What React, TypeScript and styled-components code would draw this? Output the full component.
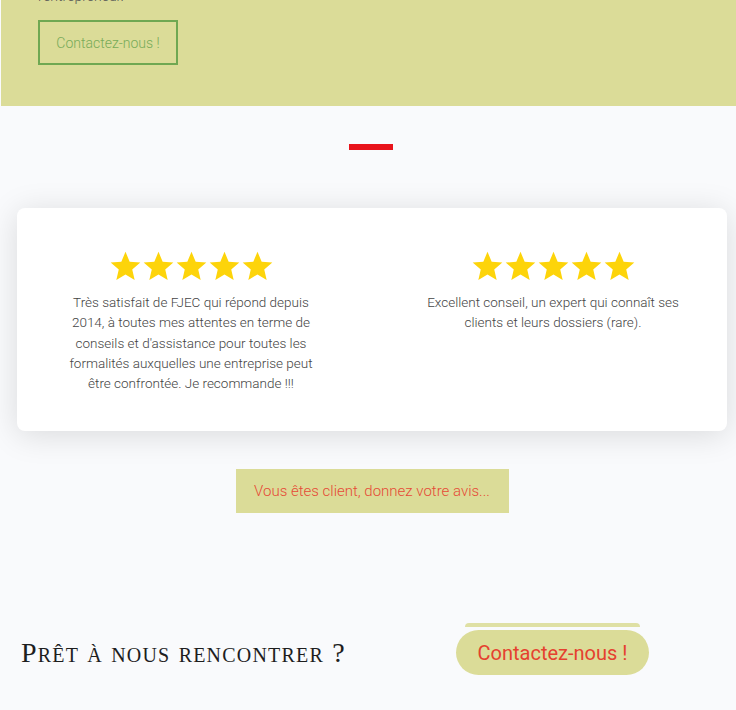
import React from 'react'
import styled, { createGlobalStyle } from 'styled-components'

const GlobalStyle = createGlobalStyle`
    html, body {
        margin: 0;
        padding: 0;
        background: #f9fafc;
        font-family: Roboto, "Liberation Sans", sans-serif;
    }
`

const Page = styled.div`
    width: 736px;
    min-height: 710px;
    overflow: hidden;
`

const Hero = styled.section`
    display: flow-root;
    height: 106px;
    margin-left: 1px;
    padding: 0 37px;
    background: #dbdc98;
    box-sizing: border-box;
`

const HeroText = styled.p`
    margin: -14px 0 0;
    font-size: 14px;
    line-height: 20px;
    font-weight: 300;
    color: #555;
`

const OutlineButton = styled.a`
    display: inline-flex;
    align-items: center;
    justify-content: center;
    margin-top: 14px;
    width: 140px;
    height: 45px;
    box-sizing: border-box;
    border: 2px solid #6fa852;
    color: #78ab59;
    font-size: 14px;
    font-weight: 300;
    text-decoration: none;
`

const Divider = styled.div`
    width: 44px;
    height: 6px;
    margin: 38px 0 0 349px;
    background: #e8131b;
`

const Card = styled.div`
    margin: 58px 9px 0 17px;
    padding: 43px 0 38px;
    background: #fff;
    border-radius: 8px;
    box-shadow: 0 4px 32px rgba(0, 0, 0, 0.13);
    display: grid;
    grid-template-columns: 262px 262px;
    column-gap: 100px;
    justify-content: center;
`

const Review = styled.div`
    display: flex;
    flex-direction: column;
    align-items: center;
    text-align: center;
`

const Stars = styled.div`
    display: flex;
    height: 31px;
    margin-bottom: 10px;
`

const ReviewText = styled.p`
    margin: 0;
    font-size: 13.5px;
    line-height: 20.3px;
    font-weight: 300;
    color: #444;
`

const ButtonRow = styled.div`
    display: flex;
    justify-content: center;
    margin: 38px 9px 0 17px;
`

const FilledButton = styled.a`
    display: inline-flex;
    align-items: center;
    justify-content: center;
    width: 273px;
    height: 44px;
    background: #dbdc98;
    color: #e64a36;
    font-size: 15px;
    font-weight: 300;
    text-decoration: none;
`

const CtaRow = styled.div`
    display: flex;
    align-items: center;
    justify-content: space-between;
    margin-top: 117px;
    padding: 0 87px 0 21px;
`

const CtaTitle = styled.h2`
    margin: 0;
    font-family: "Liberation Serif", "DejaVu Serif", serif;
    font-variant: small-caps;
    font-weight: 400;
    font-size: 28px;
    letter-spacing: 1.2px;
    color: #1e1e1e;
`

const Pill = styled.a`
    position: relative;
    display: inline-flex;
    align-items: center;
    justify-content: center;
    width: 193px;
    height: 45px;
    border-radius: 23px;
    background: #dbdc98;
    color: #e5412f;
    font-size: 20px;
    font-weight: 400;
    text-decoration: none;

    &::before {
        content: '';
        position: absolute;
        left: 9px;
        right: 9px;
        top: -7px;
        height: 4px;
        border-radius: 4px 4px 0 0;
        background: #dfe0a4;
    }
`

const Star = () => (
    <svg width="33" height="31" viewBox="0 0 24 23">
        <path
            fill="#fdd40a"
            d="M12 0.6l3.1 7.3 7.9 0.7-6 5.2 1.8 7.7L12 17.4l-6.8 4.1 1.8-7.7-6-5.2 7.9-0.7z"
        />
    </svg>
)

const FiveStars = () => (
    <Stars>
        {[0, 1, 2, 3, 4].map(i => <Star key={i} />)}
    </Stars>
)

const reviews = [
    "Très satisfait de FJEC qui répond depuis 2014, à toutes mes attentes en terme de conseils et d'assistance pour toutes les formalités auxquelles une entreprise peut être confrontée. Je recommande !!!",
    "Excellent conseil, un expert qui connaît ses clients et leurs dossiers (rare).",
]

export default function App() {
    return (
        <Page>
            <GlobalStyle />
            <Hero>
                <HeroText>l'entrepreneur.</HeroText>
                <OutlineButton href="#">Contactez-nous !</OutlineButton>
            </Hero>
            <Divider />
            <Card>
                {reviews.map((text, i) => (
                    <Review key={i}>
                        <FiveStars />
                        <ReviewText>{text}</ReviewText>
                    </Review>
                ))}
            </Card>
            <ButtonRow>
                <FilledButton href="#">Vous êtes client, donnez votre avis...</FilledButton>
            </ButtonRow>
            <CtaRow>
                <CtaTitle>Prêt à nous rencontrer ?</CtaTitle>
                <Pill href="#">Contactez-nous !</Pill>
            </CtaRow>
        </Page>
    )
}
